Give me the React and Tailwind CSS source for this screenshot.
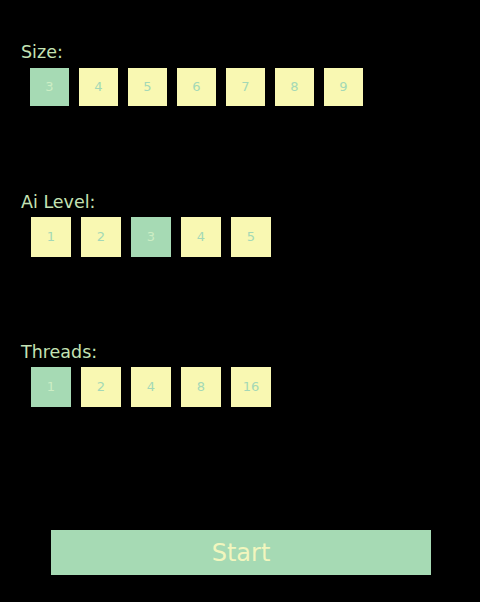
import { useState } from 'react';

const sizes = [3, 4, 5, 6, 7, 8, 9];
const levels = [1, 2, 3, 4, 5];
const threads = [1, 2, 4, 8, 16];

const OptionRow = ({ label, options, value, onChange, small }) => (
  <div className="h-[150px]">
    <div className="pl-[21px] text-[17.5px] leading-[20px] text-[#c4e2b4]">{label}</div>
    <div className={small ? 'mt-[6px] ml-[30px] flex gap-[10px]' : 'mt-[5px] ml-[31px] flex gap-[10px]'}>
      {options.map((opt) => (
        <button
          key={opt}
          onClick={() => onChange(opt)}
          className={
            (small ? 'w-[39px] h-[38px] ' : 'w-[40px] h-[40px] ') +
            'flex items-center justify-center text-[13px] ' +
            (opt === value ? 'bg-[#a6dab4] text-[#cdeec4]' : 'bg-[#f9f8b2] text-[#a4d8b6]')
          }
        >
          {opt}
        </button>
      ))}
    </div>
  </div>
);

export default function App() {
  const [size, setSize] = useState(3);
  const [level, setLevel] = useState(3);
  const [thread, setThread] = useState(1);

  return (
    <div className="w-[480px] h-[602px] bg-black pt-[42px] font-['DejaVu_Sans',sans-serif]">
      <OptionRow label="Size:" options={sizes} value={size} onChange={setSize} small />
      <OptionRow label="Ai Level:" options={levels} value={level} onChange={setLevel} />
      <OptionRow label="Threads:" options={threads} value={thread} onChange={setThread} />
      <button className="mt-[38px] ml-[51px] w-[380px] h-[45px] bg-[#a6dab4] text-[24px] text-[#f2f6be] flex items-center justify-center">
        Start
      </button>
    </div>
  );
}
